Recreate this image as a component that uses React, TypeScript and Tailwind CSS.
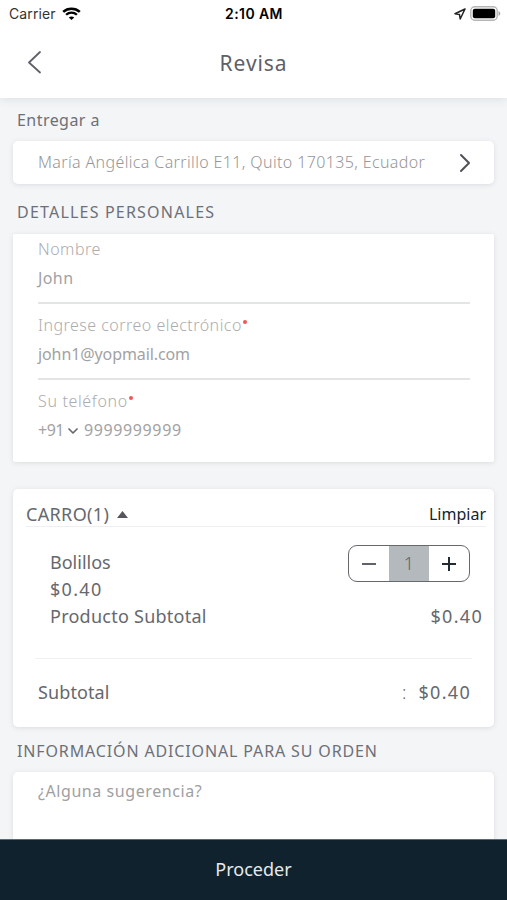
import type { ReactNode } from 'react';

const card = 'mx-[13px] bg-white shadow-[0_1px_5px_rgba(60,70,80,0.13)]';

function SectionTitle({ children, className }: { children: ReactNode; className: string }) {
  return <h2 className={`pl-[17px] text-base leading-6 whitespace-nowrap text-[#6e7077] ${className}`}>{children}</h2>;
}

function Field({ label, required, labelClass, children, last }: {
  label: string; required?: boolean; labelClass: string; children: ReactNode; last?: boolean;
}) {
  return (
    <div className={`h-[67px] whitespace-nowrap ${last ? '' : 'mb-[9px] border-b-2 border-[#e3e4e5]'}`}>
      <div className="flex h-6 items-center font-light text-[#acacae]">
        <span className={labelClass}>{label}</span>
        {required && <span className="mt-[-7px] ml-px size-1 rounded-full bg-[#f2555a]" />}
      </div>
      <div className="mt-[5px] flex h-6 items-center text-[#a2a2a4]">{children}</div>
    </div>
  );
}

export default function App() {
  return (
    <div className="flex h-[900px] w-[507px] flex-col overflow-hidden bg-[#f3f5f7] font-['Noto_Sans','Open_Sans',sans-serif] text-base text-[#66686e]">
      <header className="z-10 h-[98px] shrink-0 bg-white shadow-[0_1px_9px_rgba(60,70,80,0.13)]">
        <div className="grid h-7 grid-cols-3 items-center pr-[7px] pl-[9px] font-['Inter','Liberation_Sans',sans-serif] text-sm text-black">
          <div className="flex items-center gap-[6px]">
            <span className="text-[14px] tracking-[0.1px] text-[#333]">Carrier</span>
            <svg className="mb-px" width="19" height="14" viewBox="0 0 19 15" preserveAspectRatio="none" fill="none" stroke="black">
              <path d="M1.2 5.2C5.9.8 13.1.8 17.8 5.2" strokeWidth="2.6" />
              <path d="M4.1 8.3c3.1-2.9 7.7-2.9 10.8 0" strokeWidth="2.4" />
              <path d="M9.5 14 6.8 11.2c1.5-1.4 3.9-1.4 5.4 0Z" fill="black" stroke="none" />
            </svg>
          </div>
          <span className="pr-px text-center text-[14px] font-semibold tracking-[0.4px]">2:10 AM</span>
          <div className="mb-px flex items-center justify-end gap-[4px]">
            <svg width="12" height="12" viewBox="0 0 12 12" fill="none" stroke="#222" strokeWidth="1.5" strokeLinejoin="round">
              <path d="M11 1 1 5.8l4.5.7.7 4.5Z" />
            </svg>
            <svg className="mr-[-1px]" width="31" height="15" viewBox="0 0 31 15">
              <rect x=".8" y=".8" width="26.4" height="13.4" rx="4" fill="white" stroke="#b5b5b5" strokeWidth="1.4" />
              <rect x="2.8" y="2.8" width="22.4" height="9.4" rx="2" />
              <path d="M28.5 5.2c2.4.7 2.4 3.9 0 4.6Z" fill="#aaa" />
            </svg>
          </div>
        </div>
        <div className="grid h-[70px] grid-cols-[72px_1fr_72px] items-center">
          <svg className="mb-[2px] ml-[27px]" width="16" height="24" viewBox="0 0 16 24" fill="none" stroke="#606168" strokeWidth="1.8" strokeLinecap="round" strokeLinejoin="round">
            <path d="M13 2 2 12.5 13 22.5" />
          </svg>
          <h1 className="pt-[2px] text-center text-[21px] tracking-[0.9px] text-[#5f6067]">Revisa</h1>
        </div>
      </header>

      <main className="min-h-0 flex-1 overflow-hidden">
        <SectionTitle className="mt-[10px] tracking-[0.45px]">Entregar a</SectionTitle>
        <div className={`${card} mt-[9px] flex h-[43px] items-center justify-between rounded-[5px] pr-[23px] pl-[25px]`}>
          <span className="mb-[2px] text-base font-light tracking-[0.37px] whitespace-nowrap text-[#969698]">María Angélica Carrillo E11, Quito 170135, Ecuador</span>
          <svg width="12" height="20" viewBox="0 0 12 20" fill="none" stroke="#505157" strokeWidth="2" strokeLinecap="round" strokeLinejoin="round">
            <path d="m2 2 8 8-8 8" />
          </svg>
        </div>

        <SectionTitle className="mt-[16px] tracking-[1.2px]">DETALLES PERSONALES</SectionTitle>
        <div className={`${card} mt-[10px] h-[228px] rounded-[2px] pt-[3px] pr-6 pl-[25px]`}>
          <Field label="Nombre" labelClass="tracking-[0.5px]">
            <span className="tracking-[0.4px]">John</span>
          </Field>
          <Field label="Ingrese correo electrónico" required labelClass="tracking-[0.48px]">
            <span className="tracking-[-0.1px]">john1@yopmail.com</span>
          </Field>
          <Field label="Su teléfono" required labelClass="tracking-[0.65px]" last>
            <span className="tracking-[-0.5px]">+91</span>
            <svg className="mt-px mr-[6px] ml-[4px]" width="10" height="8" viewBox="0 0 10 8" fill="none" stroke="#68696e" strokeWidth="1.7" strokeLinecap="round" strokeLinejoin="round">
              <path d="m1 2 4 4 4-4" />
            </svg>
            <span className="tracking-[0.62px]">9999999999</span>
          </Field>
        </div>

        <section className={`${card} mt-[27px] h-[238px] rounded-[5px]`}>
          <div className="mr-[8px] ml-[13px] flex h-[38px] items-start justify-between border-b border-[#eeeff0] pt-[11px]">
            <div className="flex h-7 items-center">
              <span className="text-lg leading-7 tracking-[0.35px]">CARRO(1)</span>
              <svg className="ml-2" width="11" height="7" viewBox="0 0 11 7" fill="#55565e"><path d="M5.5 0 11 7H0Z" /></svg>
            </div>
            <span className="text-base leading-7 text-[#14252f]">Limpiar</span>
          </div>
          <div className="flex h-[101px] justify-between pt-[22px] pr-[12px] pl-[37px] text-lg leading-[27px]">
            <div>
              <div>Bolillos</div>
              <div className="tracking-[1.3px]">$0.40</div>
              <div className="tracking-[0.25px]">Producto Subtotal</div>
            </div>
            <div className="flex flex-col items-end">
              <div className="mt-[-4px] mr-3 grid h-[37px] w-[122px] shrink-0 grid-cols-3 items-stretch overflow-hidden rounded-[9px] border border-[#66686c]">
                <button className="grid place-items-center" aria-label="Menos"><span className="h-[2px] w-[14px] bg-[#606368]" /></button>
                <span className="grid place-items-center bg-[#b4b9bd] font-light text-[#606368]">1</span>
                <button className="grid place-items-center" aria-label="Más">
                  <svg width="14" height="14" viewBox="0 0 14 14" stroke="#202b35" strokeWidth="2"><path d="M0 7h14M7 0v14" /></svg>
                </button>
              </div>
              <span className="mt-[21px] mr-[-1px] tracking-[1.3px]">$0.40</span>
            </div>
          </div>
          <div className="mx-[22px] mt-[30px] border-t border-[#f0f1f2]" />
          <div className="flex h-[66px] items-center justify-between pr-[23px] pl-[25px] text-lg">
            <span className="tracking-[0.1px]">Subtotal</span>
            <div className="flex gap-3"><span className="font-light">:</span><span className="tracking-[1.3px]">$0.40</span></div>
          </div>
        </section>

        <SectionTitle className="mt-[12px] tracking-[0.86px]">INFORMACIÓN ADICIONAL PARA SU ORDEN</SectionTitle>
        <div className={`${card} mt-[9px] h-[90px] rounded-[5px] pt-[7px] pl-[25px] text-[#a0a0a2]`}>
          <span className="tracking-[0.57px]">¿Alguna sugerencia?</span>
        </div>
      </main>

      <button className="z-10 grid h-[61px] shrink-0 place-items-center border-t border-[#5d6870] bg-[#10222d] pb-[3px] text-lg text-[#e6eaec]">Proceder</button>
    </div>
  );
}
